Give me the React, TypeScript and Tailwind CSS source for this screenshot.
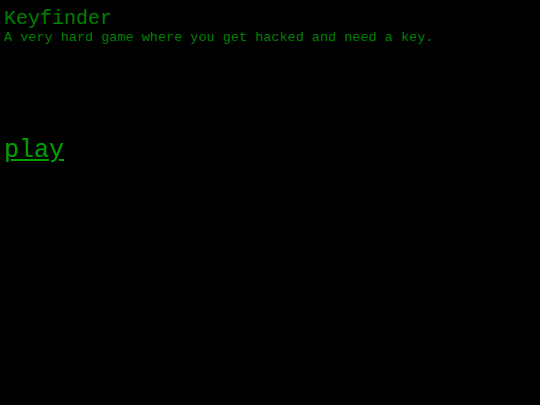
import React from "react";

const App: React.FC = () => {
  return (
    <div className="min-h-[405px] bg-black px-1 pt-[7px] text-[#008000] font-['Liberation_Mono',monospace]">
      <h1 className="text-[20px] leading-[23px]">Keyfinder</h1>
      <p className="text-[13.5px] leading-[15px]">
        A very hard game where you get hacked and need a key.
      </p>
      <div className="mt-[92px]">
        <a href="#" className="text-[25px] leading-[28px] text-[#00a000] underline">
          play
        </a>
      </div>
    </div>
  );
};

export default App;
